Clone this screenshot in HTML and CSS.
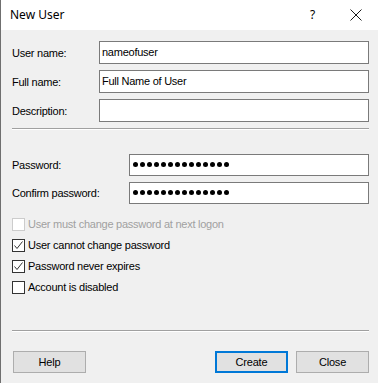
FILE: index.html
```html
<!DOCTYPE html>
<html>
<head>
<meta charset="utf-8">
<link rel="stylesheet" href="styles.css">
</head>
<body>
<div class="window">
  <div class="titlebar">
    <span class="title">New User</span>
    <span class="help">?</span>
    <svg class="close" width="12" height="12" viewBox="0 0 12 12"><path d="M0.5 0.5 L11.5 11.5 M11.5 0.5 L0.5 11.5" stroke="#1a1a1a" stroke-width="1" fill="none"/></svg>
  </div>
  <div class="content">
    <div class="fields fields-a">
      <label class="lbl">User name:</label>
      <div class="box">nameofuser</div>
      <label class="lbl">Full name:</label>
      <div class="box">Full Name of User</div>
      <label class="lbl">Description:</label>
      <div class="box"></div>
    </div>
    <div class="sep sep-1"></div>
    <div class="fields fields-b">
      <label class="lbl">Password:</label>
      <div class="box pw"><span class="dots"><i></i><i></i><i></i><i></i><i></i><i></i><i></i><i></i><i></i><i></i><i></i><i></i><i></i><i></i></span></div>
      <label class="lbl">Confirm password:</label>
      <div class="box pw"><span class="dots"><i></i><i></i><i></i><i></i><i></i><i></i><i></i><i></i><i></i><i></i><i></i><i></i><i></i><i></i></span></div>
    </div>
    <div class="checks">
      <div class="chk disabled"><span class="cb"></span><span>User must change password at next logon</span></div>
      <div class="chk"><span class="cb"><svg width="11" height="11" viewBox="0 0 11 11"><path d="M1.5 5.5 L4 8.5 L9.5 1.5" stroke="#333" stroke-width="1" fill="none"/></svg></span><span>User cannot change password</span></div>
      <div class="chk"><span class="cb"><svg width="11" height="11" viewBox="0 0 11 11"><path d="M1.5 5.5 L4 8.5 L9.5 1.5" stroke="#333" stroke-width="1" fill="none"/></svg></span><span>Password never expires</span></div>
      <div class="chk"><span class="cb"></span><span>Account is disabled</span></div>
    </div>
    <div class="sep sep-2"></div>
    <div class="buttons">
      <button class="btn">Help</button>
      <span class="spacer"></span>
      <button class="btn default">Create</button>
      <button class="btn">Close</button>
    </div>
  </div>
</div>
</body>
</html>
```
FILE: styles.css
```css
* { box-sizing: border-box; }
html, body { margin: 0; padding: 0; background: #f0f0f0; }
body { width: 378px; height: 383px; overflow: hidden; font-family: "Liberation Sans", Arial, sans-serif; font-size: 11px; letter-spacing: -0.25px; color: #000; }
.window { width: 378px; height: 383px; border-left: 1px solid #6f6f6f; display: flex; flex-direction: column; }
.titlebar { height: 30px; background: #fff; display: flex; align-items: center; padding-left: 9px; }
.title { font-family: "Noto Sans", sans-serif; font-size: 12px; letter-spacing: 0; color: #000; flex: 1; padding-bottom: 1px; }
.help { font-family: "Noto Sans", sans-serif; font-size: 12px; letter-spacing: 0; width: 12px; margin-right: 28px; padding-bottom: 1px; }
.close { margin-right: 16px; margin-bottom: 1px; }
.content { flex: 1; background: #f0f0f0; padding: 11px 9px 0 11px; display: flex; flex-direction: column; }
.fields { display: grid; align-items: center; }
.fields-a { grid-template-columns: 87px 1fr; row-gap: 6px; }
.fields-b { grid-template-columns: 117px 1fr; row-gap: 6px; margin-top: 24px; }
.lbl { line-height: 13px; padding-top: 1px; }
.box { height: 23px; border: 1px solid #7a7a7a; background: #fff; padding: 3px 2px 0 2px; line-height: 14px; white-space: nowrap; }
.pw { height: 22px; padding: 7px 0 0 3px; }
.dots { display: flex; gap: 2px; }
.dots i { display: block; width: 5px; height: 5px; border-radius: 50%; background: #000; }
.sep { height: 2px; border-top: 1px solid #a0a0a0; border-bottom: 1px solid #fff; }
.sep-1 { margin-top: 6px; }
.sep-2 { margin-top: 36px; }
.checks { margin-top: 14px; display: flex; flex-direction: column; gap: 8px; }
.chk { display: flex; align-items: center; line-height: 13px; height: 13px; }
.cb { width: 13px; height: 13px; border: 1px solid #333; background: #fff; margin-right: 3px; display: flex; align-items: center; justify-content: center; }
.disabled { color: #a0a0a0; }
.disabled .cb { border-color: #ccc; }
.buttons { display: flex; margin-top: 19px; padding-left: 1px; gap: 8px; }
.spacer { flex: 1; }
.btn { width: 73px; height: 22px; background: #e1e1e1; border: 1px solid #adadad; font-family: "Liberation Sans", Arial, sans-serif; font-size: 11px; letter-spacing: -0.2px; color: #000; padding: 0; }
.btn.default { border: 2px solid #0078d7; }
```
